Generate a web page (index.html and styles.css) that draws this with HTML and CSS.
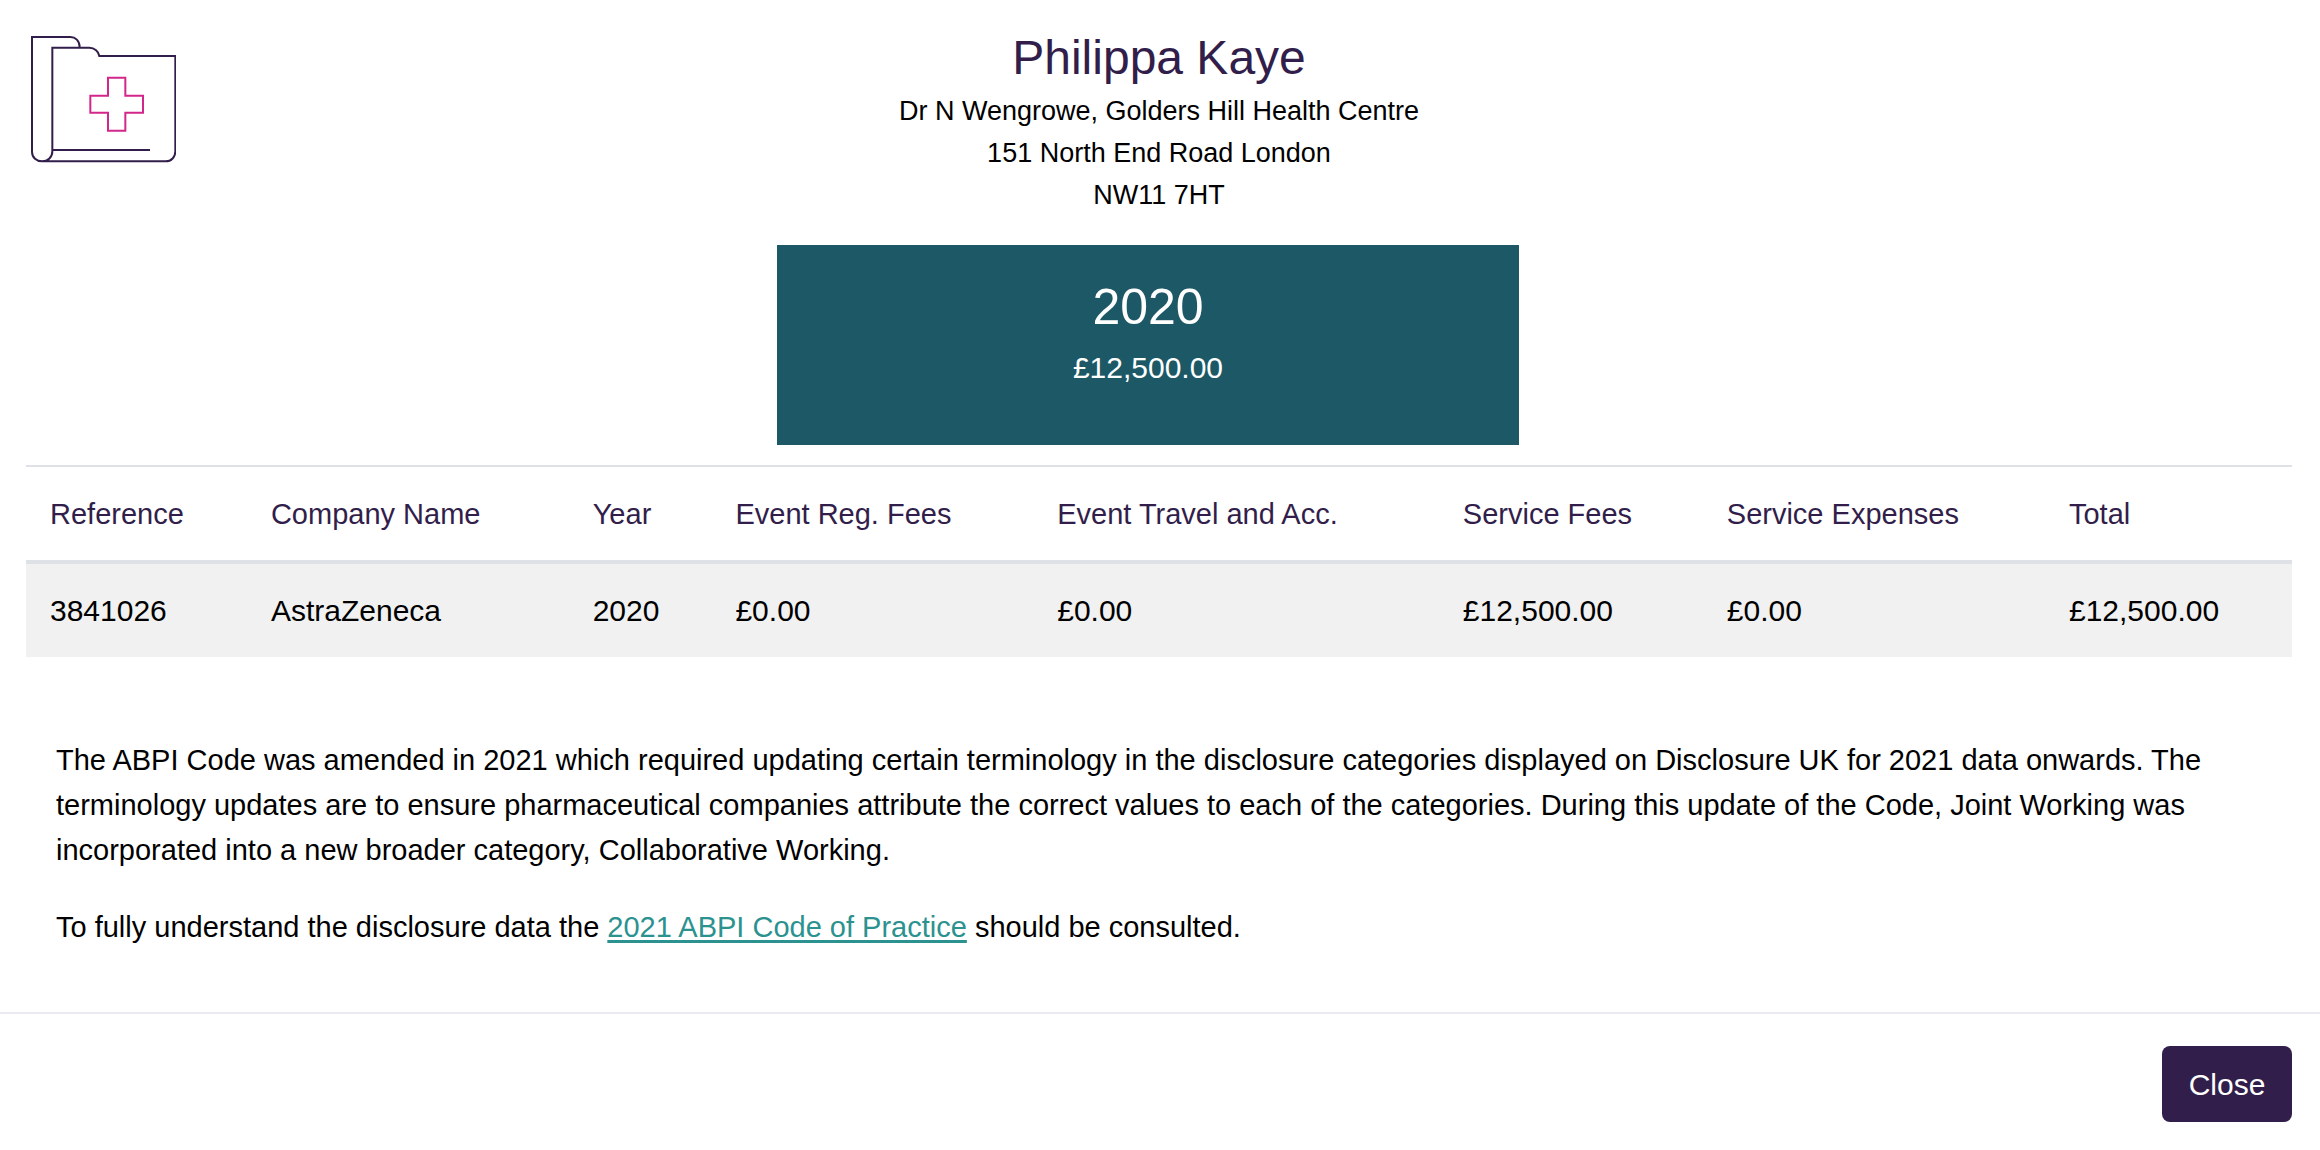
FILE: index.html
```html
<!DOCTYPE html>
<html lang="en">
<head>
<meta charset="utf-8">
<meta name="viewport" content="width=device-width, initial-scale=1">
<title>Philippa Kaye</title>
<link rel="stylesheet" href="styles.css">
</head>
<body>
<main class="content">
  <header class="person">
    <svg class="folder" viewBox="93 78 435 381" fill="none" stroke-width="6" aria-hidden="true">
      <g stroke="#321e4a">
        <path d="M239 112C239 92 226 81 211 81H96V425C96 443 110 454 126 454C144 454 157 441 157 424V113H268C284 113 296 125 298 138H526V424C526 441 514 454 497 454H126"/>
        <path d="M157 420H450"/>
      </g>
      <path stroke="#d3268a" stroke-width="6" d="M324 203H376V257H429V308H376V362H324V308H271V257H324Z"/>
    </svg>
    <div class="details">
      <h1 class="name">Philippa Kaye</h1>
      <p class="address">Dr N Wengrowe, Golders Hill Health Centre<br>151 North End Road London<br>NW11 7HT</p>
    </div>
  </header>

  <section class="summary">
    <h2 class="summary-year">2020</h2>
    <p class="summary-amount">£12,500.00</p>
  </section>

  <table class="payments">
    <thead>
      <tr>
        <th class="col-reference" scope="col">Reference</th>
        <th class="col-company" scope="col">Company Name</th>
        <th class="col-year" scope="col">Year</th>
        <th class="col-event" scope="col">Event Reg. Fees</th>
        <th class="col-travel" scope="col">Event Travel and Acc.</th>
        <th class="col-service" scope="col">Service Fees</th>
        <th class="col-expenses" scope="col">Service Expenses</th>
        <th scope="col">Total</th>
      </tr>
    </thead>
    <tbody>
      <tr>
        <td>3841026</td>
        <td>AstraZeneca</td>
        <td>2020</td>
        <td>£0.00</td>
        <td>£0.00</td>
        <td>£12,500.00</td>
        <td>£0.00</td>
        <td>£12,500.00</td>
      </tr>
    </tbody>
  </table>

  <section class="notes">
    <p>The ABPI Code was amended in 2021 which required updating certain terminology in the disclosure categories displayed on Disclosure UK for 2021 data onwards. The terminology updates are to ensure pharmaceutical companies attribute the correct values to each of the categories. During this update of the Code, Joint Working was incorporated into a new broader category, Collaborative Working.</p>
    <p>To fully understand the disclosure data the <a href="#code">2021 ABPI Code of Practice</a> should be consulted.</p>
  </section>
</main>
<footer class="actions">
  <button class="close" type="button">Close</button>
</footer>
</body>
</html>
```
FILE: styles.css
```css
* {
  box-sizing: border-box;
}

body {
  margin: 0;
  background: #fff;
  color: #000;
  font: 300 30px/45px "Liberation Sans", Arial, sans-serif;
}

h1, h2, p {
  margin: 0;
  font-weight: 300;
}

.content {
  padding: 28px 28px 62px 26px;
}

.person {
  display: grid;
  grid-template-columns: 150px 1fr 150px;
}

.folder {
  width: 145px;
  height: 127px;
  margin: 8px 0 0 5px;
}

.details {
  text-align: center;
}

.name {
  margin-bottom: 2px;
  color: #321e4a;
  font-size: 48px;
  line-height: 60px;
}

.address {
  font-size: 27px;
  line-height: 42px;
}

.summary {
  width: calc(100% / 3 - 14px);
  min-height: 200px;
  margin: 29px 0 20px calc(100% / 3 - 4px);
  padding: 32px 24px;
  background: #1c5866;
  color: #fff;
  text-align: center;
}

.summary-year {
  font-size: 50px;
  line-height: 60px;
}

.summary-amount {
  margin-top: 8px;
}

.payments {
  width: 100%;
  border-spacing: 0;
  table-layout: fixed;
  border-top: 2px solid #dee2e6;
  text-align: left;
}

.payments th,
.payments td {
  padding: 24px;
  font-weight: 300;
}

.payments th {
  padding: 25px 24px 23px;
  color: #321e4a;
  font-size: 29px;
  border-bottom: 4px solid #dee2e6;
}

.payments td {
  background: #f1f1f1;
}

.col-reference { width: 9.75%; }
.col-company { width: 14.2%; }
.col-year { width: 6.3%; }
.col-event { width: 14.2%; }
.col-travel { width: 17.9%; }
.col-service { width: 11.65%; }
.col-expenses { width: 15.1%; }

.notes {
  display: grid;
  gap: 32px;
  padding: 81px 30px 0;
  font-size: 29px;
}

.notes a {
  color: #2b928f;
  text-decoration-thickness: 3px;
  text-underline-offset: 3px;
}

.actions {
  display: flex;
  justify-content: flex-end;
  padding: 32px 28px 28px;
  border-top: 2px solid #e9e9ef;
}

.close {
  width: 130px;
  height: 76px;
  padding: 0;
  border: 0;
  border-radius: 8px;
  background: #321e4a;
  color: #fff;
  font: inherit;
}
```
